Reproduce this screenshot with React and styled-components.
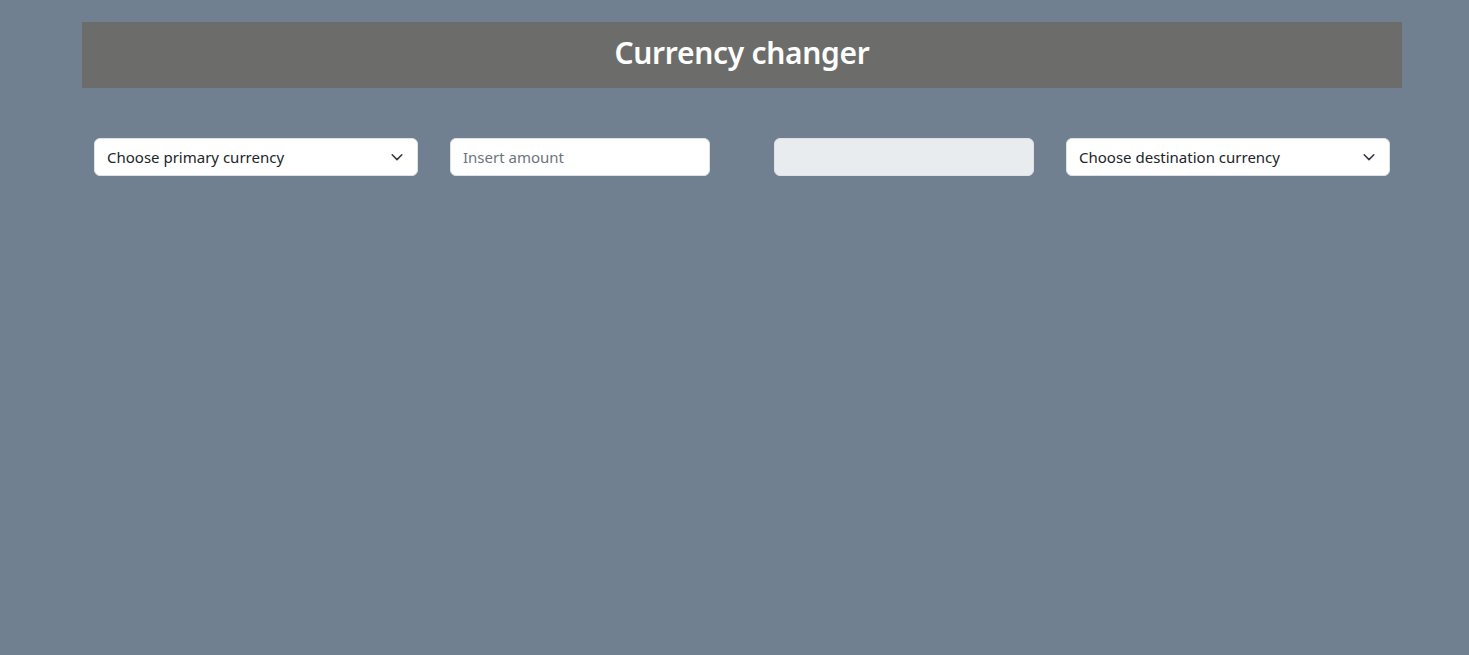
import React from "react"
import styled, { createGlobalStyle } from "styled-components"

const GlobalStyle = createGlobalStyle`
  html, body {
    margin: 0;
    padding: 0;
    background: #708090;
    font-family: "Noto Sans", "Open Sans", sans-serif;
    color: #212529;
  }
  body {
    min-height: 100vh;
  }
`

const Container = styled.div`
  width: 1320px;
  margin-left: 82px;
  padding-top: 22px;
`

const Header = styled.header`
  background: #6c6d6b;
  height: 66px;
  box-sizing: border-box;
  padding-bottom: 5px;
  display: flex;
  align-items: center;
  justify-content: center;
`

const Title = styled.h1`
  margin: 0;
  color: #ffffff;
  font-size: 30px;
  font-weight: 600;
  letter-spacing: -0.3px;
`

const Row = styled.div`
  display: flex;
  align-items: center;
  padding: 50px 12px 0;
`

const Field = styled.div`
  position: relative;
  width: ${p => p.$width}px;
  margin-right: ${p => p.$gap || 0}px;
`

const Select = styled.select`
  appearance: none;
  width: 100%;
  height: 38px;
  box-sizing: border-box;
  padding: 0 36px 0 12px;
  border: 1px solid #dee2e6;
  border-radius: 6px;
  background: #ffffff;
  font-family: inherit;
  font-size: 15px;
  color: #212529;
  outline: none;
`

const Chevron = styled.svg`
  position: absolute;
  right: 14px;
  top: 13px;
  width: 14px;
  height: 12px;
  pointer-events: none;
`

const Input = styled.input`
  width: 100%;
  height: 38px;
  box-sizing: border-box;
  padding: 0 12px;
  border: 1px solid #dee2e6;
  border-radius: 6px;
  background: ${p => (p.disabled ? "#e9ecef" : "#ffffff")};
  font-family: inherit;
  font-size: 15px;
  color: #212529;
  outline: none;

  &::placeholder {
    color: #6c757d;
  }
`

const CurrencySelect = ({ label, width, gap }) => (
  <Field $width={width} $gap={gap}>
    <Select defaultValue="">
      <option value="" disabled>{label}</option>
      <option value="EUR">EUR</option>
      <option value="USD">USD</option>
      <option value="GBP">GBP</option>
    </Select>
    <Chevron viewBox="0 0 16 12">
      <path d="M2.5 3.5 8 9l5.5-5.5" fill="none" stroke="#343a40" strokeWidth="1.8" strokeLinecap="round" strokeLinejoin="round" />
    </Chevron>
  </Field>
)

export default function App() {
  return (
    <>
      <GlobalStyle />
      <Container>
        <Header>
          <Title>Currency changer</Title>
        </Header>
        <Row>
          <CurrencySelect label="Choose primary currency" width={324} gap={32} />
          <Field $width={260} $gap={64}>
            <Input type="number" placeholder="Insert amount" />
          </Field>
          <Field $width={260} $gap={32}>
            <Input type="text" disabled />
          </Field>
          <CurrencySelect label="Choose destination currency" width={324} />
        </Row>
      </Container>
    </>
  )
}
